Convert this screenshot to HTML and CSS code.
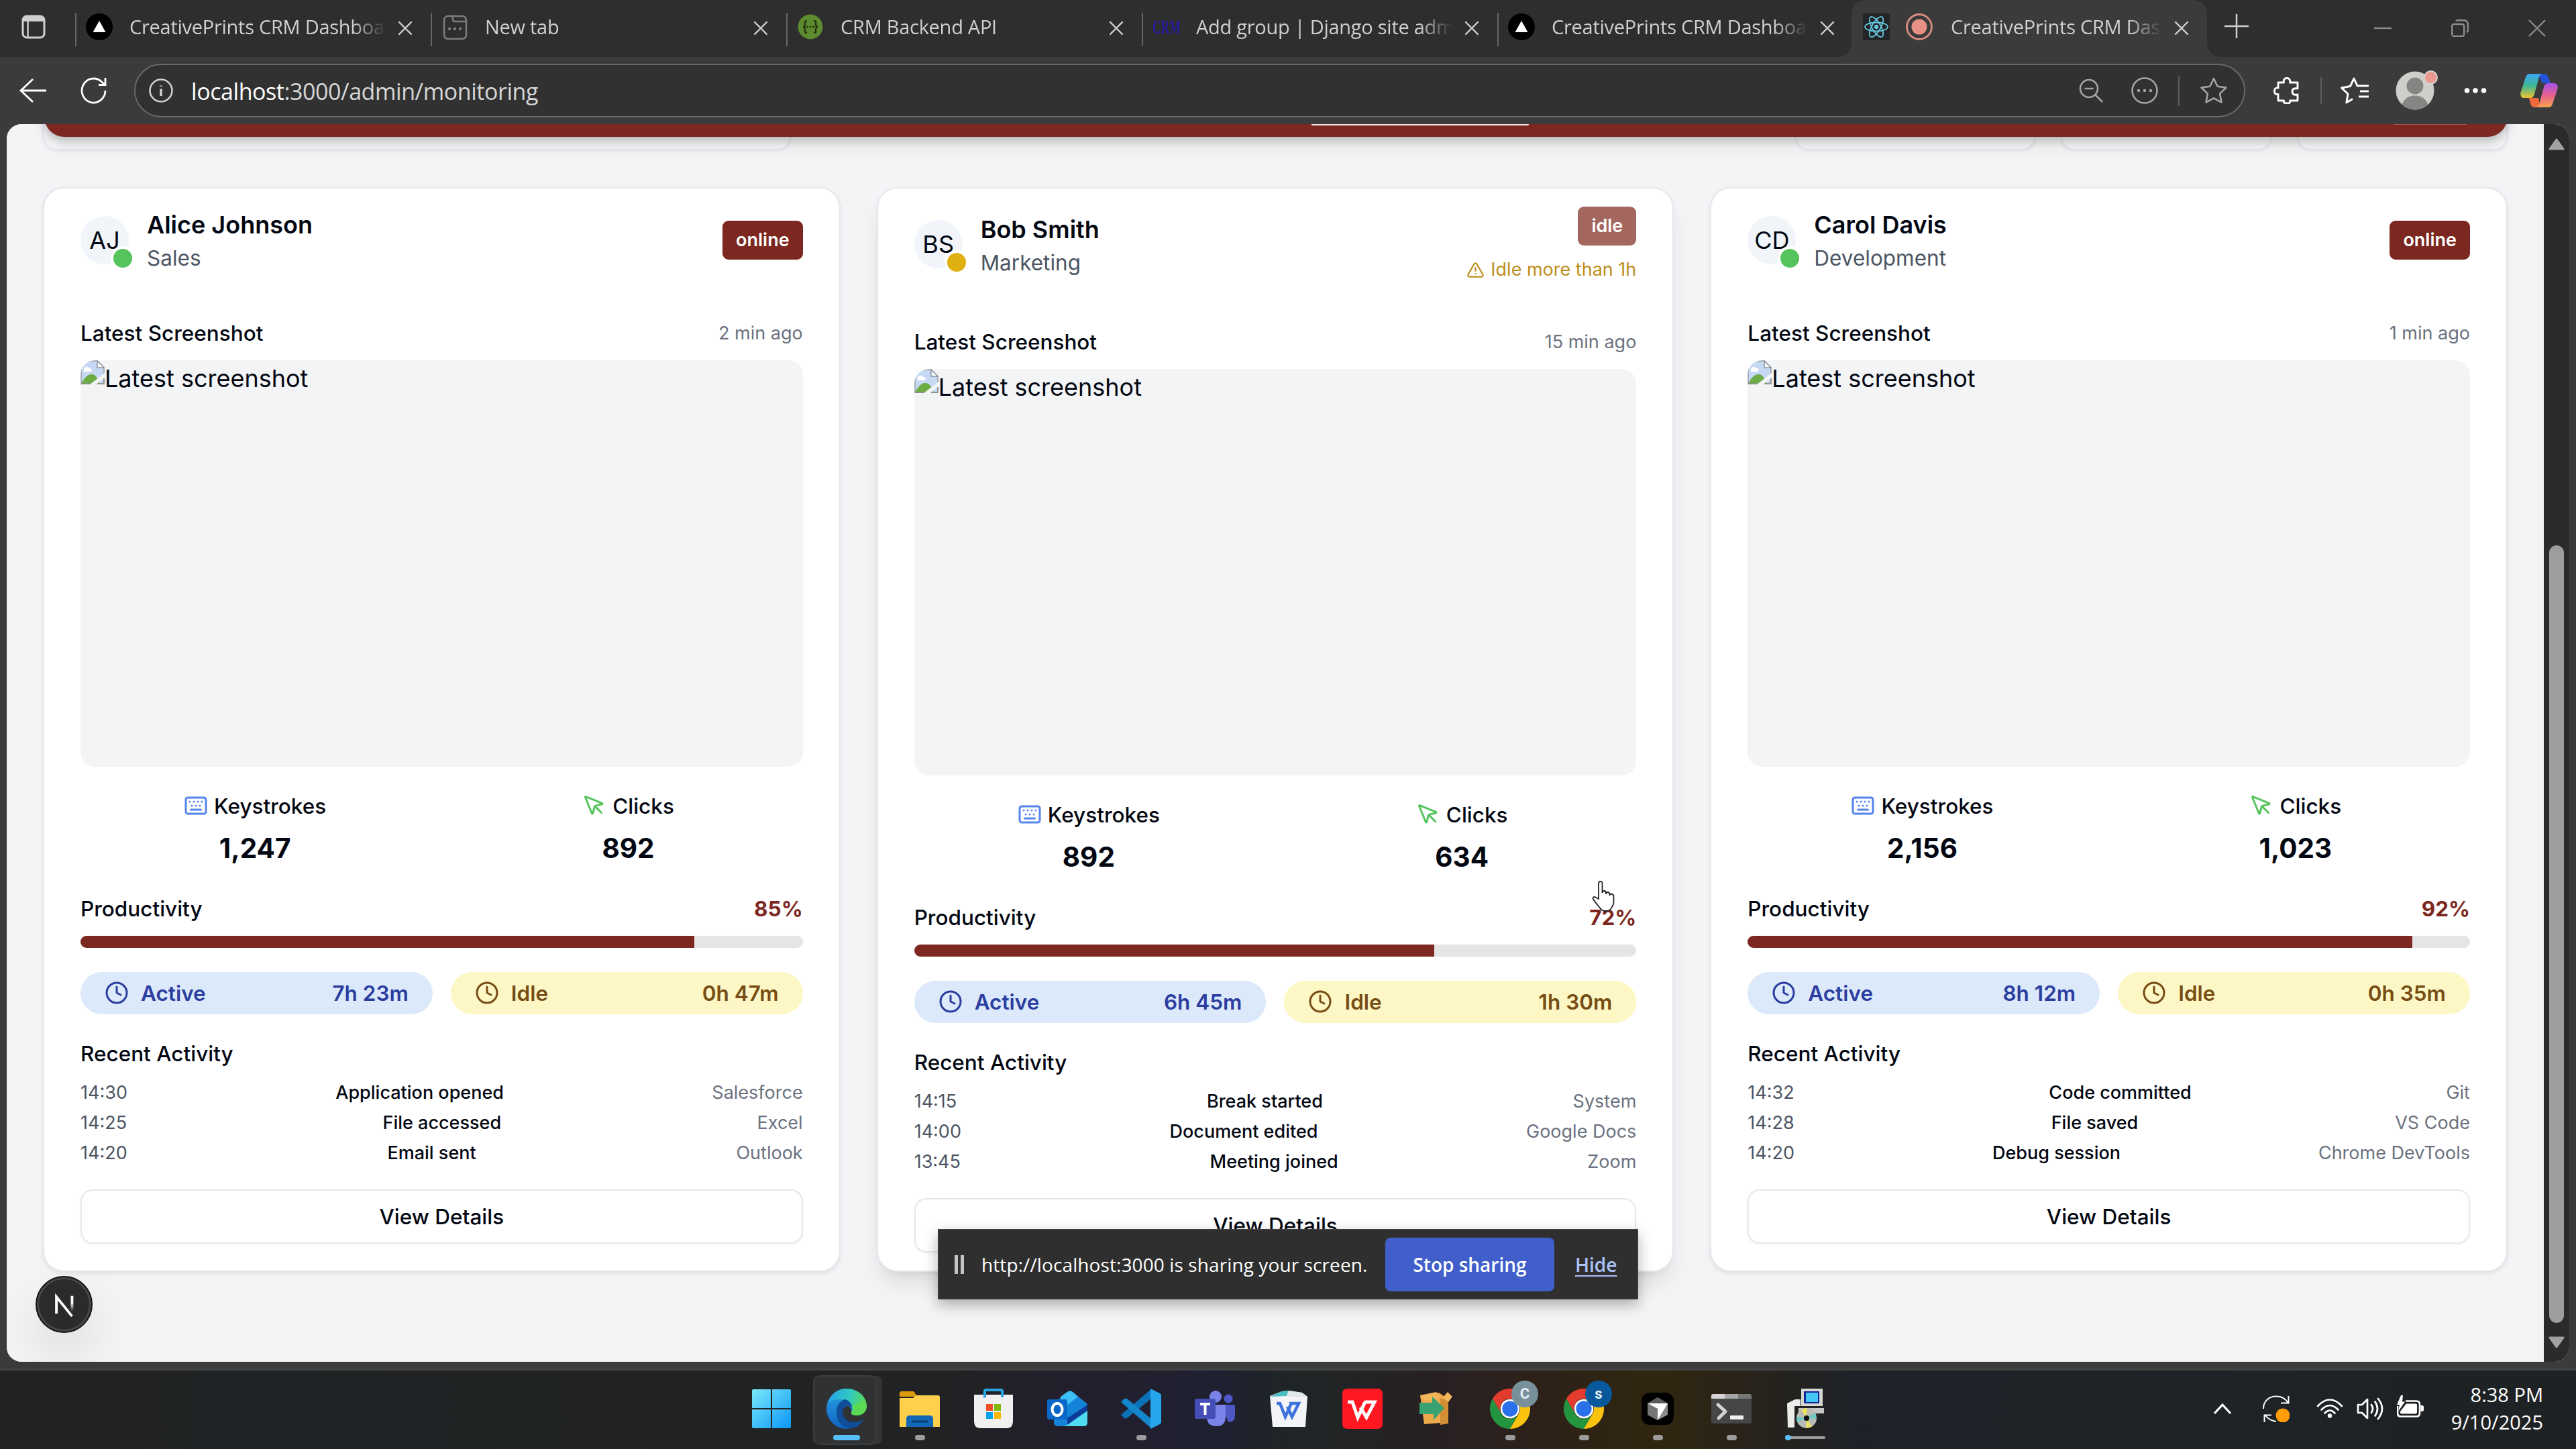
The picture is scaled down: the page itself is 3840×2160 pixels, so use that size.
FILE: index.html
```html
<!DOCTYPE html>
<html lang="en">
<head>
<meta charset="utf-8">
<title>CreativePrints CRM Dashboard</title>
<link rel="stylesheet" href="styles.css">
</head>
<body>
<svg class="sprite" aria-hidden="true">
  <symbol id="i-close" viewBox="0 0 24 24"><path d="M1.5 1.5l21 21M22.5 1.5l-21 21"/></symbol>
  <symbol id="i-vercel" viewBox="0 0 40 40"><circle cx="20" cy="20" r="20" fill="#000"/><path d="M20 11l9.500 17h-19z" fill="#fff"/></symbol>
  <symbol id="i-keyboard" viewBox="0 0 24 24"><rect x="2" y="4" width="20" height="16" rx="2"/><path d="M6 8h.01M10 8h.01M14 8h.01M18 8h.01M8 12h.01M12 12h.01M16 12h.01M7 16h10"/></symbol>
  <symbol id="i-pointer" viewBox="0 0 24 24"><path d="M12.6 12.600L19 19"/><path d="M3.688 3.037a.497.497 0 0 0-.651.651l6.500 15.999a.501.501 0 0 0 .947-.062l1.569-6.083a2 2 0 0 1 1.448-1.479l6.124-1.579a.5.5 0 0 0 .063-.947z"/></symbol>
  <symbol id="i-clock" viewBox="0 0 24 24"><circle cx="12" cy="12" r="10"/><path d="M12 6v6l4 2"/></symbol>
  <symbol id="i-alert" viewBox="0 0 24 24"><path d="m21.730 18-8-14a2 2 0 0 0-3.480 0l-8 14A2 2 0 0 0 4 21h16a2 2 0 0 0 1.730-3M12 9v4M12 17h.01"/></symbol>
  <symbol id="i-broken" viewBox="0 0 36 36">
    <path d="M1 1h24l10 10v24H1z" fill="#c6d8f3" stroke="#9a9fa6" stroke-width="1.500"/>
    <path d="M25 1v10h10z" fill="#fff" stroke="#8d9299" stroke-width="1.500"/>
    <path d="M5 14c0-4 6-6 8-2 4-1 5 4 2 5H6c-2 0-2-2-1-3z" fill="#fff"/>
    <path d="M1 35c4-8 10-15 16-14 5 0 9 6 12 14z" fill="#6dab45"/>
    <path d="M14 36L36 19v7L24 36z" fill="#f3f4f6"/>
    <path d="M1 35h14M25 35h10V27" fill="none" stroke="#8b9086" stroke-width="1.500"/>
  </symbol>
  <symbol id="i-chrome" viewBox="0 0 48 48"><path d="M24 12H44.800A24 24 0 0 0 3.200 12L13.600 30A12 12 0 0 1 24 12z" fill="#e33b2e"/><path d="M3.200 12A24 24 0 0 0 24 48L34.400 30A12 12 0 0 1 13.600 30z" fill="#24953f"/><path d="M44.800 12A24 24 0 0 1 24 48L34.400 30A12 12 0 0 0 24 12z" fill="#fcc210"/><circle cx="24" cy="24" r="11.500" fill="#fff"/><circle cx="24" cy="24" r="9.300" fill="#2a70ea"/></symbol>
</svg>

<header class="tabstrip">
  <div class="tab-actions"><svg class="ico36" viewBox="0 0 36 36"><rect x="2" y="2" width="32" height="32" rx="6" fill="none" stroke="#cfcfcf" stroke-width="3"/><path d="M2 10V8a6 6 0 0 1 6-6h20a6 6 0 0 1 6 6v2z" fill="#cfcfcf"/><path d="M9.500 10v24" stroke="#cfcfcf" stroke-width="2.500"/></svg></div>
  <div class="tab"><svg class="fav"><use href="#i-vercel"/></svg><span class="tab-title">CreativePrints CRM Dashboa</span><svg class="x"><use href="#i-close"/></svg></div>
  <div class="tab"><svg class="fav" viewBox="0 0 40 40" fill="none" stroke="#7d7d7d" stroke-width="2.500"><rect x="4" y="4" width="33" height="34" rx="6"/><path d="M17 4v5a3 3 0 0 0 3 3h17"/><path d="M12 23h.01M20 23h.01M28 23h.01" stroke-width="4.500" stroke-linecap="round"/></svg><span class="tab-title">New tab</span><svg class="x"><use href="#i-close"/></svg></div>
  <div class="tab"><svg class="fav" viewBox="0 0 40 40"><circle cx="20" cy="20" r="18.500" fill="#5c8c2f"/><g fill="none" stroke="#27340f" stroke-width="2.500"><path d="M15 11c-4 0-3 2-3 5s-1 4-3 4c2 0 3 1 3 4s-1 5 3 5M25 11c4 0 3 2 3 5s1 4 3 4c-2 0-3 1-3 4s1 5-3 5"/><path d="M15.500 20h.01M20 20h.01M24.500 20h.01" stroke-linecap="round" stroke-width="3"/></g></svg><span class="tab-title">CRM Backend API</span><svg class="x"><use href="#i-close"/></svg></div>
  <div class="tab"><span class="fav crm"><span>CRM</span></span><span class="tab-title">Add group | Django site adm</span><svg class="x"><use href="#i-close"/></svg></div>
  <div class="tab"><svg class="fav"><use href="#i-vercel"/></svg><span class="tab-title">CreativePrints CRM Dashboa</span><svg class="x"><use href="#i-close"/></svg></div>
  <div class="tab active">
    <svg class="fav" viewBox="0 0 40 40"><rect width="40" height="40" rx="3" fill="#222427"/><g fill="none" stroke="#67c7de" stroke-width="1.800"><ellipse cx="20" cy="20" rx="17" ry="6.500"/><ellipse cx="20" cy="20" rx="17" ry="6.500" transform="rotate(60 20 20)"/><ellipse cx="20" cy="20" rx="17" ry="6.500" transform="rotate(120 20 20)"/></g><circle cx="20" cy="20" r="3.200" fill="#67c7de"/></svg>
    <svg class="fav rec" viewBox="0 0 40 40"><circle cx="20" cy="20" r="18.500" fill="none" stroke="#d98c80" stroke-width="2.800"/><circle cx="20" cy="20" r="11.500" fill="#e79186"/></svg>
    <span class="tab-title">CreativePrints CRM Das</span><svg class="x"><use href="#i-close"/></svg></div>
  <svg class="plus" viewBox="0 0 36 36"><path d="M18 0v36M0 18h36"/></svg>
  <div class="win">
    <svg viewBox="0 0 26 26"><path d="M0 13h26"/></svg>
    <svg viewBox="0 0 26 26"><rect x="1.200" y="7" width="18" height="18" rx="3"/><path d="M7 2.500Q8 1 11 1.200h7q7 0 7 7v7q0 3-2 4"/></svg>
    <svg viewBox="0 0 26 26"><path d="M1 1l24 24M25 1L1 25"/></svg>
  </div>
</header>

<nav class="toolbar">
  <svg class="nav-ico" viewBox="0 0 40 40"><path d="M20 3L2 20l18 17M2 20h38"/></svg>
  <svg class="nav-ico" viewBox="0 0 40 40"><path d="M37 20a17.500 18 0 1 1-6-13.500l5 4.500M37 1v10.500H27"/></svg>
  <div class="address">
    <svg class="info" viewBox="0 0 36 36"><circle cx="18" cy="18" r="16.500"/><path d="M18 15.500v10.500M18 10.500v1.500" stroke-width="3.500"/></svg>
    <span class="url"><b>localhost</b>:3000/admin/monitoring</span>
    <div class="address-tools">
      <svg class="t36" viewBox="0 0 36 36"><circle cx="15" cy="15" r="13"/><path d="M8.500 15h13M24 24l11 11"/></svg>
      <svg class="t40" viewBox="0 0 40 40"><circle cx="20" cy="20" r="18.500"/><path d="M11 20h.01M20 20h.01M29 20h.01" stroke-width="4.500" stroke-linecap="round"/></svg>
      <i class="bar"></i>
      <svg class="t40" viewBox="0 0 40 40"><path d="M20 2l5.600 11.800 12.900 1.800-9.400 9 2.400 13L20 31.300 8.500 37.600l2.400-13-9.400-9 12.900-1.800z" stroke-linejoin="round"/></svg>
    </div>
  </div>
  <div class="tools">
    <svg class="t40 puzzle" viewBox="0 0 40 40"><path d="M7 8h8.500c-1-4 1-6.500 4.500-6.500S25.500 4 24.500 8H36v9c-5-1-8 .5-8 4.500s3 5.500 8 4.500v9H24.500c1 3-1 4.500-4.500 4s-5.500-1-4.500-4H7v-9.500c-4 .5-5.500-1-5.500-4.500S3 15.500 7 16z" stroke-linejoin="round"/></svg>
    <i class="bar"></i>
    <svg class="t42" viewBox="0 0 42 40"><path d="M24 13h18M29 21h13M27 29h15M25 13L20 2l-5.500 11.500L1.500 16l9.500 9-2.200 13L18 32.500" stroke-linejoin="round"/></svg>
    <div class="avatar-btn"><svg viewBox="0 0 58 58"><clipPath id="av"><circle cx="29" cy="29" r="28.500"/></clipPath><circle cx="29" cy="29" r="28.500" fill="#cfcecb"/><g clip-path="url(#av)" fill="#868583"><circle cx="29" cy="22" r="12.500"/><ellipse cx="29" cy="54" rx="20" ry="17.500"/></g></svg><i class="notif"></i></div>
    <svg class="dots" viewBox="0 0 34 10"><path d="M4.500 5h.01M17 5h.01M29.500 5h.01"/></svg>
    <svg class="copilot" viewBox="0 0 56 50">
      <defs><linearGradient id="cpa" x1="0" y1="0" x2="0" y2="1"><stop offset="0" stop-color="#3ba7f5"/><stop offset=".5" stop-color="#3fb894"/><stop offset="1" stop-color="#f0c330"/></linearGradient><linearGradient id="cpb" x1="0" y1="0" x2="0" y2="1"><stop offset="0" stop-color="#a352e8"/><stop offset=".5" stop-color="#e8608e"/><stop offset="1" stop-color="#f7a44b"/></linearGradient></defs>
      <path d="M26 0h8c5 0 7 2 8.500 7L45 14H33z" fill="#2453d8"/><path d="M30 50h-8c-4 0-6-2-7-6l-2-8h14z" fill="#ee6a3a"/>
      <path d="M14 0h18c-3 1-4 4-5 8l-6 22c-1 4-3 6-7 6H6c-5 0-7-4-5-10L8 5c1-3 3-5 6-5z" fill="url(#cpa)"/>
      <path d="M42 50H24c3-1 4-4 5-8l6-22c1-4 3-6 7-6h8c5 0 7 4 5 10l-7 21c-1 3-3 5-6 5z" fill="url(#cpb)"/>
    </svg>
  </div>
</nav>

<div class="viewport">
  <main class="page">
    <div class="page-head"><i class="mark"></i><i class="mark faint"></i></div>
    <div class="filters"><div class="f-search"></div><div class="f-a"></div><div class="f-b"></div><div class="f-c"></div></div>
    <section class="cards">

      <article class="card">
        <div class="card-head">
          <div class="avatar">AJ<i class="status online"></i></div>
          <div class="who"><h3>Alice Johnson</h3><p>Sales</p></div>
          <div class="state"><span class="badge">online</span></div>
        </div>
        <div class="row title"><span>Latest Screenshot</span><small>2 min ago</small></div>
        <div class="shot"><svg><use href="#i-broken"/></svg><span>Latest screenshot</span></div>
        <div class="metrics">
          <div><p><svg class="blue"><use href="#i-keyboard"/></svg>Keystrokes</p><strong>1,247</strong></div>
          <div><p><svg class="green"><use href="#i-pointer"/></svg>Clicks</p><strong>892</strong></div>
        </div>
        <div class="row title"><span>Productivity</span><b>85%</b></div>
        <div class="progress"><i style="width:85%"></i></div>
        <div class="pills"><div class="pill active-time"><svg><use href="#i-clock"/></svg><span>Active</span><em>7h 23m</em></div><div class="pill idle-time"><svg><use href="#i-clock"/></svg><span>Idle</span><em>0h 47m</em></div></div>
        <h4>Recent Activity</h4>
        <ul class="log">
          <li><time>14:30</time><span>Application opened</span><em>Salesforce</em></li>
          <li><time>14:25</time><span>File accessed</span><em>Excel</em></li>
          <li><time>14:20</time><span>Email sent</span><em>Outlook</em></li>
        </ul>
        <button class="details">View Details</button>
      </article>

      <article class="card hovered">
        <div class="card-head">
          <div class="avatar">BS<i class="status idle"></i></div>
          <div class="who"><h3>Bob Smith</h3><p>Marketing</p></div>
          <div class="state"><span class="badge muted">idle</span><span class="warn"><svg><use href="#i-alert"/></svg>Idle more than 1h</span></div>
        </div>
        <div class="row title"><span>Latest Screenshot</span><small>15 min ago</small></div>
        <div class="shot"><svg><use href="#i-broken"/></svg><span>Latest screenshot</span></div>
        <div class="metrics">
          <div><p><svg class="blue"><use href="#i-keyboard"/></svg>Keystrokes</p><strong>892</strong></div>
          <div><p><svg class="green"><use href="#i-pointer"/></svg>Clicks</p><strong>634</strong></div>
        </div>
        <div class="row title"><span>Productivity</span><b>72%</b></div>
        <div class="progress"><i style="width:72%"></i></div>
        <div class="pills"><div class="pill active-time"><svg><use href="#i-clock"/></svg><span>Active</span><em>6h 45m</em></div><div class="pill idle-time"><svg><use href="#i-clock"/></svg><span>Idle</span><em>1h 30m</em></div></div>
        <h4>Recent Activity</h4>
        <ul class="log">
          <li><time>14:15</time><span>Break started</span><em>System</em></li>
          <li><time>14:00</time><span>Document edited</span><em>Google Docs</em></li>
          <li><time>13:45</time><span>Meeting joined</span><em>Zoom</em></li>
        </ul>
        <button class="details">View Details</button>
      </article>

      <article class="card">
        <div class="card-head">
          <div class="avatar">CD<i class="status online"></i></div>
          <div class="who"><h3>Carol Davis</h3><p>Development</p></div>
          <div class="state"><span class="badge">online</span></div>
        </div>
        <div class="row title"><span>Latest Screenshot</span><small>1 min ago</small></div>
        <div class="shot"><svg><use href="#i-broken"/></svg><span>Latest screenshot</span></div>
        <div class="metrics">
          <div><p><svg class="blue"><use href="#i-keyboard"/></svg>Keystrokes</p><strong>2,156</strong></div>
          <div><p><svg class="green"><use href="#i-pointer"/></svg>Clicks</p><strong>1,023</strong></div>
        </div>
        <div class="row title"><span>Productivity</span><b>92%</b></div>
        <div class="progress"><i style="width:92%"></i></div>
        <div class="pills"><div class="pill active-time"><svg><use href="#i-clock"/></svg><span>Active</span><em>8h 12m</em></div><div class="pill idle-time"><svg><use href="#i-clock"/></svg><span>Idle</span><em>0h 35m</em></div></div>
        <h4>Recent Activity</h4>
        <ul class="log">
          <li><time>14:32</time><span>Code committed</span><em>Git</em></li>
          <li><time>14:28</time><span>File saved</span><em>VS Code</em></li>
          <li><time>14:20</time><span>Debug session</span><em>Chrome DevTools</em></li>
        </ul>
        <button class="details">View Details</button>
      </article>
    </section>
    <div class="next-badge"><svg viewBox="0 0 86 86"><defs><linearGradient id="nx" x1="0" y1="0" x2="0" y2="1"><stop offset=".45" stop-color="#fff"/><stop offset="1" stop-color="#fff" stop-opacity="0"/></linearGradient></defs><path d="M30.500 57V30.500L55 61" fill="none" stroke="#fff" stroke-width="4"/><path d="M53 29h4v24h-4z" fill="url(#nx)"/></svg></div>
  </main>
  <div class="scrollbar"><svg viewBox="0 0 24 18"><path d="M12 2L22 16H2z"/></svg><i></i><svg class="down" viewBox="0 0 24 18"><path d="M12 16L22 2H2z"/></svg></div>
</div>

<div class="share"><span class="grip"></span><span class="share-text">http://localhost:3000 is sharing your screen.</span><span class="stop">Stop sharing</span><a>Hide</a></div>
<svg class="cursor" viewBox="0 0 34 46"><path d="M10 27V4q0-3 2.800-3T15.500 4v14q0-3 2.700-3t2.800 3v2q0-3 2.600-3t2.800 3v2q0-2.500 2.400-2.500T32.500 22v10c0 4-2 6-3.500 8.500Q27 45 20 45q-5 0-7.500-4C9 37 5 32 2 27.500c-1.500-2.500 1-4.500 3.500-3z" fill="#fff" stroke="#222" stroke-width="1.800"/></svg>

<footer class="taskbar">
  <div class="apps">
    <div class="app"><svg viewBox="0 0 60 60"><defs><linearGradient id="wn" x1="0" y1="0" x2="1" y2="1"><stop offset="0" stop-color="#7ce8fd"/><stop offset="1" stop-color="#0b96f5"/></linearGradient></defs><path d="M3 1h26v28H1V3q0-2 2-2zM31 1h26q2 0 2 2v26H31zM1 31h28v28H3q-2 0-2-2zM31 31h28v26q0 2-2 2H31z" fill="url(#wn)"/></svg></div>
    <div class="app current"><svg viewBox="0 0 60 60"><defs><linearGradient id="e1" x1="0" y1=".4" x2="1" y2=".6"><stop offset="0" stop-color="#2aa8e8"/><stop offset=".5" stop-color="#2fc8c0"/><stop offset="1" stop-color="#5fdc4c"/></linearGradient><linearGradient id="e2" x1="0" y1="0" x2="0" y2="1"><stop offset="0" stop-color="#2aa5e6"/><stop offset="1" stop-color="#0f62c0"/></linearGradient></defs><circle cx="30" cy="30" r="30" fill="url(#e2)"/><path d="M3 20C8 6 18 0 30 0c17 0 30 12 30 26 0 10-8 14-15 14-6 0-9-2-8-5 2-2 2-6 1-9-2-6-8-10-17-10C12 16 5 18 3 20z" fill="url(#e1)"/><path d="M27 16c-9 4-12 11-12 19 0 14 10 25 23 24 9-2 14-7 17-13-5 3-9 4-14 4-10 0-17-6-17-15 0-4 3-8 7-9 4 0 6 2 7 1-1-6-5-10-11-11z" fill="#104c98"/><path d="M60 28v22l-5-4c-5 3-9 4-14 4-10 0-17-6-17-15 0-4 3-8 7-9 5 0 7 5 6 9-1 3 2 5 8 5 7 0 12-3 15-12z" fill="#2f3133"/><path d="M38 26c2 4 1 7-1 9-1 3 2 5 8 5 7 0 15-4 15-14l-6-8z" fill="#5bd955"/><path d="M24 35c0 9 7 15 17 15 5 0 9-1 14-4-4 7-9 12-17 13-9-2-15-12-14-24z" fill="#104c98"/></svg></div>
    <div class="app run"><svg viewBox="0 0 60 60"><path d="M0 7q0-3 3-3h17q2 0 3 3l4 5H0z" fill="#dc9b0d"/><path d="M0 14h20l5-4h32q3 0 3 3v44H0z" fill="#ffd04c"/><path d="M10 57V45q0-5 5-5h30q5 0 5 5v12z" fill="#1467b5"/><path d="M18 49h24" stroke="#0a3f78" stroke-width="3"/></svg></div>
    <div class="app"><svg viewBox="0 0 60 60"><path d="M17 14V4q0-2 2-2h22q2 0 2 2v10" fill="none" stroke="#2ba6e4" stroke-width="4"/><path d="M1 9h58v40q0 10-10 10H11Q1 59 1 49z" fill="#f0f0f0"/><path d="M15 14V5h4v8M41 13V5h4v8" fill="#2ba6e4"/><path d="M19 23h10v10H19z" fill="#ee5024"/><path d="M31 23h10v10H31z" fill="#7cb90b"/><path d="M19 35h10v10H19z" fill="#07a3ee"/><path d="M31 35h10v10H31z" fill="#fdb807"/></svg></div>
    <div class="app"><svg viewBox="0 0 60 60"><path d="M10 22L30 5q4-3 8 0l22 18v27q0 6-6 6H16q-6 0-6-6z" fill="#1583d8"/><path d="M20 12L30 5q4-3 8 0l8 7-26 20z" fill="#3bc0f5"/><path d="M60 24v26q0 6-6 6H26L60 32z" fill="#4fdcf3"/><path d="M60 24L30 44v10l30-21z" fill="#0b3c99"/><rect y="16" width="30" height="30" rx="3" fill="#0b68c8"/><ellipse cx="15" cy="31" rx="7.500" ry="9" fill="none" stroke="#fff" stroke-width="4"/></svg></div>
    <div class="app run"><svg viewBox="0 0 60 60"><path d="M0 39l5 5q2 1 4 0L45 15V1z" fill="#0c72b8"/><path d="M0 20l5-5q2-1 4 0l36 30v14z" fill="#1486cc"/><path d="M44 0l14 7q2 1 2 3v40q0 2-2 3l-14 7z" fill="#25a6ec"/></svg></div>
    <div class="app"><svg viewBox="0 0 60 60"><circle cx="50" cy="15" r="6.500" fill="#5059c9"/><path d="M40 24h18q2 0 2 3v14q0 9-10 9z" fill="#4f57c5"/><circle cx="31" cy="12" r="9" fill="#7b83eb"/><path d="M18 24h28v18q0 14-14 14T18 42z" fill="#7b83eb"/><rect y="15" width="31" height="30" rx="3" fill="#464eb8"/><path d="M8 23h15M15.500 23v16" stroke="#fff" stroke-width="4"/></svg></div>
    <div class="app"><svg viewBox="0 0 60 60"><path d="M2 11L20 4l10-1 20 3 8 6-3 45H6z" fill="#f2f4f8"/><path d="M2 12l18-8 10-1-3 8z" fill="#4bbec4"/><path d="M30 3l20 3 8 6H27z" fill="#dfe7ea"/><path d="M12 22h5l8 20 9-20M28 27l7 15 10-20H31" fill="none" stroke="#3d72dc" stroke-width="4.500"/></svg></div>
    <div class="app"><svg viewBox="0 0 60 60"><rect width="60" height="60" rx="7" fill="#ff1721"/><path d="M8 20h7l8 23 11-23M27 28l9 15 12-23H33" fill="none" stroke="#fff" stroke-width="5"/></svg></div>
    <div class="app"><svg viewBox="0 0 60 60"><path d="M6 10l28-4 14 10v34l-36 3z" fill="#eda94b"/><path d="M36 14l12 4v34l-12 2z" fill="#d48f34"/><path d="M6 10l24-5 6 9-22 4zM40 13l7-8 7 7-6 8z" fill="#f4b65b"/><path d="M5 21h19V12l18 17-16 18V38H5z" fill="#39a273"/></svg></div>
    <div class="app run"><svg><use href="#i-chrome"/></svg><span class="profile grey">C</span></div>
    <div class="app run"><svg><use href="#i-chrome"/></svg><span class="profile navy">s</span></div>
    <div class="app run"><svg viewBox="0 0 60 60"><rect x="6" y="6" width="48" height="48" rx="12" fill="#000"/><path d="M30 13l15 9v17l-15 8-15-8V22z" fill="#8b8b8b"/><path d="M30 13l15 9H15z" fill="#5b5b5b"/><path d="M15 22h30L30 47V30z" fill="#fff"/><path d="M15 22l15 8v17L15 39z" fill="#767676"/></svg></div>
    <div class="app run"><svg viewBox="0 0 60 60"><rect y="8" width="60" height="44" rx="3" fill="#464646"/><path d="M0 15v-4q0-3 3-3h17v7z" fill="#d4d4d4"/><path d="M20 8h20v7H20z" fill="#a6a6a6"/><path d="M40 8h17q3 0 3 3v4H40z" fill="#777"/><path d="M10 24l11 10-10 10" fill="none" stroke="#d4d4d4" stroke-width="5" stroke-linecap="round" stroke-linejoin="round"/><rect x="28" y="40" width="20" height="6" rx="1" fill="#f0f0f0"/></svg></div>
    <div class="app installing"><svg viewBox="0 0 60 60"><path d="M24 0h32v26H24z" fill="#d5d5d2"/><path d="M28 4h23v18H28z" fill="#10219a"/><path d="M31 6h18v14H31z" fill="#45c7f4"/><path d="M3 22l12-6h8v10H14v32H4z" fill="#ececea"/><path d="M20 29h38v8H20z" fill="#c5c5c1"/><circle cx="32" cy="44" r="15" fill="#b9bbb6"/><path d="M32 44L24 31l9-2zM32 44l8 13-9 2z" fill="#e9e25e"/><path d="M32 44l13-8 2 9zM32 44l-14 6-1-8z" fill="#6cc8c4"/><circle cx="32" cy="44" r="4" fill="#111"/></svg></div>
  </div>
  <div class="tray">
    <svg class="caret" viewBox="0 0 28 18"><path d="M2 16L14 3l12 13"/></svg>
    <svg class="sync" viewBox="0 0 40 40"><g fill="none" stroke="#fff" stroke-width="2"><path d="M1 20C1 8 10 1.500 20 1.500c8 0 14 3.500 17.500 9.500M38.500 1v10.500H27M20 39C12 38 7 34 3.500 29.500M2.500 40V29.500H13"/></g><circle cx="30" cy="30" r="10.500" fill="#ff9c07"/></svg>
    <svg class="wifi" viewBox="0 0 40 30"><g fill="none" stroke="#fff" stroke-width="2.700" stroke-linecap="round"><path d="M2 12q18-19 36 0M7.500 17.500q12.500-13 25 0M12.500 22.500q7.500-8 15 0"/></g><circle cx="20" cy="26.500" r="3.200" fill="#fff"/></svg>
    <svg class="vol" viewBox="0 0 40 34"><g fill="none" stroke="#fff" stroke-width="2.700" stroke-linecap="round" stroke-linejoin="round"><path d="M2 11h6l8-8v28l-8-8H2zM22 11q4 6 0 12M27.500 6.500q7 10.500 0 21M32 2q12 15 0 30"/></g></svg>
    <svg class="batt" viewBox="0 0 40 34"><path d="M13 8.500h16q5 0 5 5v13q0 5-5 5H6q-5 0-5-5V16" fill="none" stroke="#fff" stroke-width="2.700"/><path d="M35.500 15h2q2.500 0 2.500 2.500v4q0 2.500-2.500 2.500h-2z" fill="#fff"/><path d="M14 12.500h14q2 0 2 2v11q0 2-2 2H7q-2 0-2-2V24zM6 0L0 14h4L2 24 12 9.500H8L9 0z" fill="#fff"/></svg>
    <div class="clock"><span>8:38 PM</span><span>9/10/2025</span></div>
  </div>
</footer>
</body>
</html>
```

FILE: styles.css
```css
* { box-sizing: border-box; }
html, body { margin: 0; height: 100%; }
body { width: 3840px; height: 2160px; overflow: hidden; display: flex; flex-direction: column; position: relative; background: #3b3b3b; font-family: "Open Sans", "Noto Sans", sans-serif; color: #030712; }
h3, h4, p, ul { margin: 0; padding: 0; font-weight: inherit; }
em { font-style: normal; }
svg { display: block; flex: none; }
.sprite { position: absolute; width: 0; height: 0; }

/* Tab strip */
.tabstrip { height: 85px; flex: none; background: #2e2e2e; display: flex; align-items: flex-start; }
.tab-actions { width: 112px; padding: 22px 0 0 32px; }
.ico36 { width: 36px; height: 36px; }
.tab { width: 530px; height: 85px; display: flex; align-items: center; padding: 0 27px 5px 14px; border-left: 2px solid transparent; position: relative; }
.tab::before { content: ""; position: absolute; left: -2px; top: 19px; width: 2px; height: 50px; background: #666; }
.tab.active { background: #3b3b3b; border-radius: 20px 20px 0 0; padding-left: 15px; margin-left: -2px; width: 530px; }
.tab.active::before { left: -22px; top: 65px; width: 20px; height: 20px; background: radial-gradient(circle at 0 0, transparent 19.5px, #3b3b3b 20px); }
.tab.active::after { content: ""; position: absolute; right: -20px; top: 65px; width: 20px; height: 20px; background: radial-gradient(circle at 100% 0, transparent 19.5px, #3b3b3b 20px); }
.fav { width: 40px; height: 40px; flex: none; }
.rec { margin-left: 24px; }
.crm { font: 700 30px/40px "Liberation Serif", serif; color: #241a9c; }
.crm span { display: block; width: 71px; transform: scaleX(.58); transform-origin: 0 0; }
.tab-title { flex: 1; margin: 0 18px 0 25px; font-size: 29px; line-height: 40px; letter-spacing: -.27px; color: #cfcfcf; white-space: nowrap; overflow: hidden; -webkit-mask-image: linear-gradient(90deg, #000 calc(100% - 50px), transparent); mask-image: linear-gradient(90deg, #000 calc(100% - 50px), transparent); }
.active .tab-title { margin-left: 27px; }
.x { width: 22px; height: 22px; stroke: #cfcfcf; stroke-width: 2.400; margin-top: 3px; }
.plus { width: 36px; height: 36px; margin: 21px 0 0 26px; stroke: #cfcfcf; stroke-width: 2.500; }
.win { display: flex; gap: 89px; margin: 29px 0 0 auto; padding-right: 45px; }
.win svg { width: 26px; height: 26px; fill: none; stroke: #8c8c8c; stroke-width: 2.400; }

/* Toolbar */
.toolbar { height: 100px; flex: none; background: #3b3b3b; display: flex; align-items: center; padding: 0 27px 0 29px; }
.nav-ico { width: 40px; height: 40px; fill: none; stroke: #fff; stroke-width: 2.800; margin-right: 51px; }
.nav-ico + .nav-ico { margin-right: 40px; }
.address { width: 3147px; height: 80px; border: 2px solid #696969; border-radius: 40px; background: #313131; display: flex; align-items: center; padding: 0 25px 0 20px; }
.info { width: 36px; height: 36px; fill: none; stroke: #d2d2d2; stroke-width: 2.500; }
.url { margin-left: 27px; font-size: 34px; line-height: 46px; letter-spacing: -.43px; color: #d6d6d6; padding-top: 1px; }
.url b { font-weight: 400; color: #fff; }
.address-tools { margin-left: auto; display: flex; align-items: center; }
.address-tools svg { fill: none; stroke: #a4a4a4; stroke-width: 2.600; }
.t36 { width: 36px; height: 36px; margin-right: 42px; }
.t40 { width: 40px; height: 40px; }
.t42 { width: 42px; height: 40px; }
.bar { width: 2px; height: 45px; background: #5c5c5c; margin: 0 31px 0 30px; }
.tools { display: flex; align-items: center; margin-left: 42px; }
.tools > svg { fill: none; stroke: #fff; stroke-width: 2.900; }
.tools .bar { margin: 0 28px 0 30px; height: 40px; }
.avatar-btn { width: 58px; height: 58px; margin-left: 40px; position: relative; }
.notif { position: absolute; right: -5px; top: -1px; width: 21px; height: 21px; border-radius: 50%; background: #e9998f; border: 2px solid #d8d0ce; }
.tools .dots { width: 34px; height: 10px; margin-left: 44px; stroke-width: 7.500; stroke-linecap: round; }
.tools .copilot { width: 56px; height: 50px; margin-left: 50px; stroke: none; }

/* Browser viewport */
.viewport { height: 1845px; flex: none; margin: 0 10px; display: flex; background: #f3f4f6; border-radius: 22px; overflow: hidden; }
.page { width: 3782px; padding: 0 54px; position: relative; font-family: Inter, sans-serif; background: #f3f4f6; }
.page-head { position: absolute; z-index: 1; left: 56px; right: 54px; top: -40px; height: 59px; border-radius: 0 0 30px 30px; background: #7c2820; box-shadow: 0 5px 14px rgba(0,0,0,.2), 0 12px 24px rgba(0,0,0,.08); }
.mark { position: absolute; left: 1889px; top: 39px; width: 324px; height: 3px; background: #f0e6e4; border-radius: 2px; }
.mark.faint { left: 3503px; width: 108px; background: #9c5a54; height: 2px; }
.filters { display: flex; gap: 38px; height: 39px; }
.filters div { border: 2px solid #e5e7eb; border-top: 0; border-radius: 0 0 20px 20px; background: #f5f6f8; box-shadow: 0 2px 4px rgba(0,0,0,.05); }
.f-search { width: 1115px; margin-right: auto; }
.f-a { width: 358px; }
.f-b { width: 314px; }
.f-c { width: 314px; }
.cards { display: grid; grid-template-columns: repeat(3, 1fr); gap: 54px; margin-top: 55px; }
.card { background: #fff; border: 2px solid #e5e7eb; border-radius: 31px; padding: 27px 54px; box-shadow: 0 3px 7px rgba(0,0,0,.08); display: flex; flex-direction: column; }
.card.hovered { box-shadow: 0 22px 34px -7px rgba(0,0,0,.1), 0 9px 14px -9px rgba(0,0,0,.1); }
.card-head { display: flex; align-items: center; margin-bottom: 67px; }
.avatar { position: relative; width: 72px; height: 72px; border-radius: 50%; background: #f1f5f9; font-size: 36px; line-height: 72px; text-align: center; }
.status { position: absolute; right: -9px; bottom: -9px; width: 36px; height: 36px; border-radius: 50%; border: 4px solid #fff; }
.online { background: #56c45c; }
.idle { background: #e0b010; }
.who { margin-left: 27px; }
.who h3 { font-size: 36px; line-height: 54px; font-weight: 600; }
.who p { font-size: 31.5px; line-height: 45px; color: #4b5563; }
.state { margin-left: auto; display: flex; flex-direction: column; align-items: flex-end; gap: 18px; }
.badge { height: 58px; padding: 0 20px; border-radius: 9px; background: #7c2820; color: #fff; font-size: 27px; line-height: 58px; font-weight: 600; }
.badge.muted { background: #a3675f; }
.warn { display: flex; align-items: center; gap: 9px; font-size: 27px; line-height: 36px; color: #bd8e1d; }
.warn svg { width: 27px; height: 27px; }
.warn svg, .metrics svg, .pill svg { fill: none; stroke: currentColor; stroke-width: 2; stroke-linecap: round; stroke-linejoin: round; }
.row { display: flex; justify-content: space-between; align-items: center; font-size: 31.5px; line-height: 45px; font-weight: 500; margin-bottom: 18px; }
.row small { font-size: 27px; line-height: 36px; font-weight: 400; color: #6b7280; }
.row b { font-weight: 700; color: #7c2820; }
.shot { aspect-ratio: 16 / 9; border-radius: 22px; overflow: hidden; background: #f3f4f6; display: flex; font-size: 36px; line-height: 54px; }
.shot svg { width: 36px; height: 36px; }
.metrics { display: grid; grid-template-columns: 1fr 1fr; gap: 36px; margin: 36px 0; text-align: center; }
.metrics p { display: flex; justify-content: center; align-items: center; gap: 9px; font-size: 31.5px; line-height: 45px; font-weight: 500; margin-bottom: 9px; }
.metrics svg { width: 36px; height: 36px; }
.metrics strong { display: block; font-size: 40.5px; line-height: 63px; font-weight: 700; }
.blue { color: #5484ec; }
.green { color: #56c45c; }
.progress { height: 18px; border-radius: 9px; overflow: hidden; background: #e5e5e5; }
.progress i { display: block; height: 100%; background: #7c2820; }
.pills { display: grid; grid-template-columns: 1fr 1fr; gap: 27px; margin: 36px 0; }
.pill { display: flex; align-items: center; height: 63px; border-radius: 32px; padding: 0 36px; font-size: 31.5px; font-weight: 600; }
.pill svg { width: 36px; height: 36px; margin-right: 18px; }
.pill em { margin-left: auto; }
.active-time { background: #dce9fa; color: #2b3d9f; }
.idle-time { background: #fcf7c5; color: #774d14; }
h4 { font-size: 31.5px; line-height: 45px; font-weight: 500; margin-bottom: 18px; }
.log { list-style: none; display: flex; flex-direction: column; gap: 9px; font-size: 27px; line-height: 36px; }
.log li { display: flex; justify-content: space-between; }
.log time { color: #4b5563; }
.log span { font-weight: 500; }
.log em { color: #6b7280; }
.details { margin-top: 36px; height: 81px; border: 2px solid #e5e7eb; border-radius: 18px; background: #fff; font: 500 31.5px/45px Inter, sans-serif; color: #030712; box-shadow: 0 2px 4px rgba(0,0,0,.04); }
.next-badge { position: absolute; left: 43px; top: 1717px; width: 85px; height: 85px; border-radius: 50%; background: #2b2b2b; border: 2px solid #161616; box-shadow: inset 0 0 0 3px #474747, 0 36px 70px rgba(0,0,0,.1); }
.next-badge svg { width: 82px; height: 82px; }
.scrollbar { width: 38px; background: #2b2b2b; display: flex; flex-direction: column; align-items: center; padding: 21px 0 20px; fill: #a2a2a2; }
.scrollbar svg { width: 24px; height: 18px; stroke: #a2a2a2; stroke-width: 3; stroke-linejoin: round; }
.scrollbar i { width: 22px; height: 1159px; border-radius: 11px; background: #9d9d9d; margin-top: auto; }
.scrollbar .down { margin-top: 20px; }

/* Screen sharing notice */
.share { position: absolute; left: 1398px; top: 1832px; width: 1044px; height: 105px; background: #2f2f2f; border: 1px solid #444; box-shadow: 0 8px 20px rgba(0,0,0,.3); display: flex; align-items: center; padding: 0 29px 0 24px; font-size: 28px; line-height: 40px; color: #fff; }
.grip { width: 14px; height: 28px; border: solid #c4c4c4; border-width: 0 5px; margin-right: 26px; }
.share-text { white-space: nowrap; width: 602px; letter-spacing: .1px; }
.stop { width: 252px; height: 80px; line-height: 80px; border-radius: 8px; background: #405fcb; text-align: center; font-weight: 600; }
.share a { margin-left: 31px; color: #abc3f9; font-weight: 600; text-decoration: underline; text-underline-offset: 5px; }
.cursor { position: absolute; left: 2373px; top: 1313px; width: 34px; height: 46px; }

/* Taskbar */
.taskbar { height: 120px; flex: none; margin-top: 10px; border-top: 3px solid #454545; position: relative; display: flex; justify-content: flex-end; background: linear-gradient(90deg, #232220 0, #202325 320px, #212223 1400px, #231f2e 1620px, #1e2030 1820px, #1f2526 1920px, #282023 2150px, #2e2117 2320px, #30260f 2470px, #2a2318 2580px, #1e2228 2760px, #1f2224 3840px); }
.apps { display: flex; margin-right: auto; padding-left: 1095px; }
.app { width: 110px; height: 117px; padding: 27px 25px; position: relative; }
.app:nth-child(n+3) { left: 1px; }
.app svg { width: 60px; height: 60px; position: relative; }
.app.current::before { content: ""; position: absolute; left: 7px; top: 7px; width: 90px; height: 100px; border-radius: 10px; background: #2f3133; border: 2px solid #3c3d3f; box-shadow: 10px 0 0 -1px #343537; }
.app.current::after { content: ""; position: absolute; left: 37px; top: 96px; width: 40px; height: 8px; border-radius: 4px; background: #57bff7; }
.app.current svg { left: 2px; }
.app.run::after { content: ""; position: absolute; left: 48px; top: 96px; width: 15px; height: 8px; border-radius: 4px; background: #9c9c9c; }
.app.installing::after { content: ""; position: absolute; left: 25px; top: 98px; width: 60px; height: 4px; border-radius: 2px; background: #9c9c9c; }
.app.installing::before { content: ""; position: absolute; z-index: 1; left: 25px; top: 96px; width: 9px; height: 8px; border-radius: 4px; background: #57bff7; }
.profile { position: absolute; left: 57px; top: 15px; width: 40px; height: 40px; border-radius: 50%; text-align: center; font: 700 22px/40px Roboto, sans-serif; color: #e6edf0; }
.grey { background: #78909a; }
.navy { background: #07599c; }
.tray { display: flex; align-items: flex-start; padding-right: 49px; }
.caret { width: 28px; height: 18px; margin: 48px 46px 0 0; fill: none; stroke: #fff; stroke-width: 3.200; }
.sync { width: 40px; height: 40px; margin: 37px 40px 0 0; }
.wifi { width: 40px; height: 30px; margin: 41px 20px 0 0; }
.vol { width: 40px; height: 34px; margin: 40px 20px 0 0; }
.batt { width: 40px; height: 34px; margin: 37px 0 0 0; }
.clock { width: 178px; display: flex; flex-direction: column; align-items: flex-end; padding-top: 15px; font-size: 29px; line-height: 41px; color: #fff; }
```
